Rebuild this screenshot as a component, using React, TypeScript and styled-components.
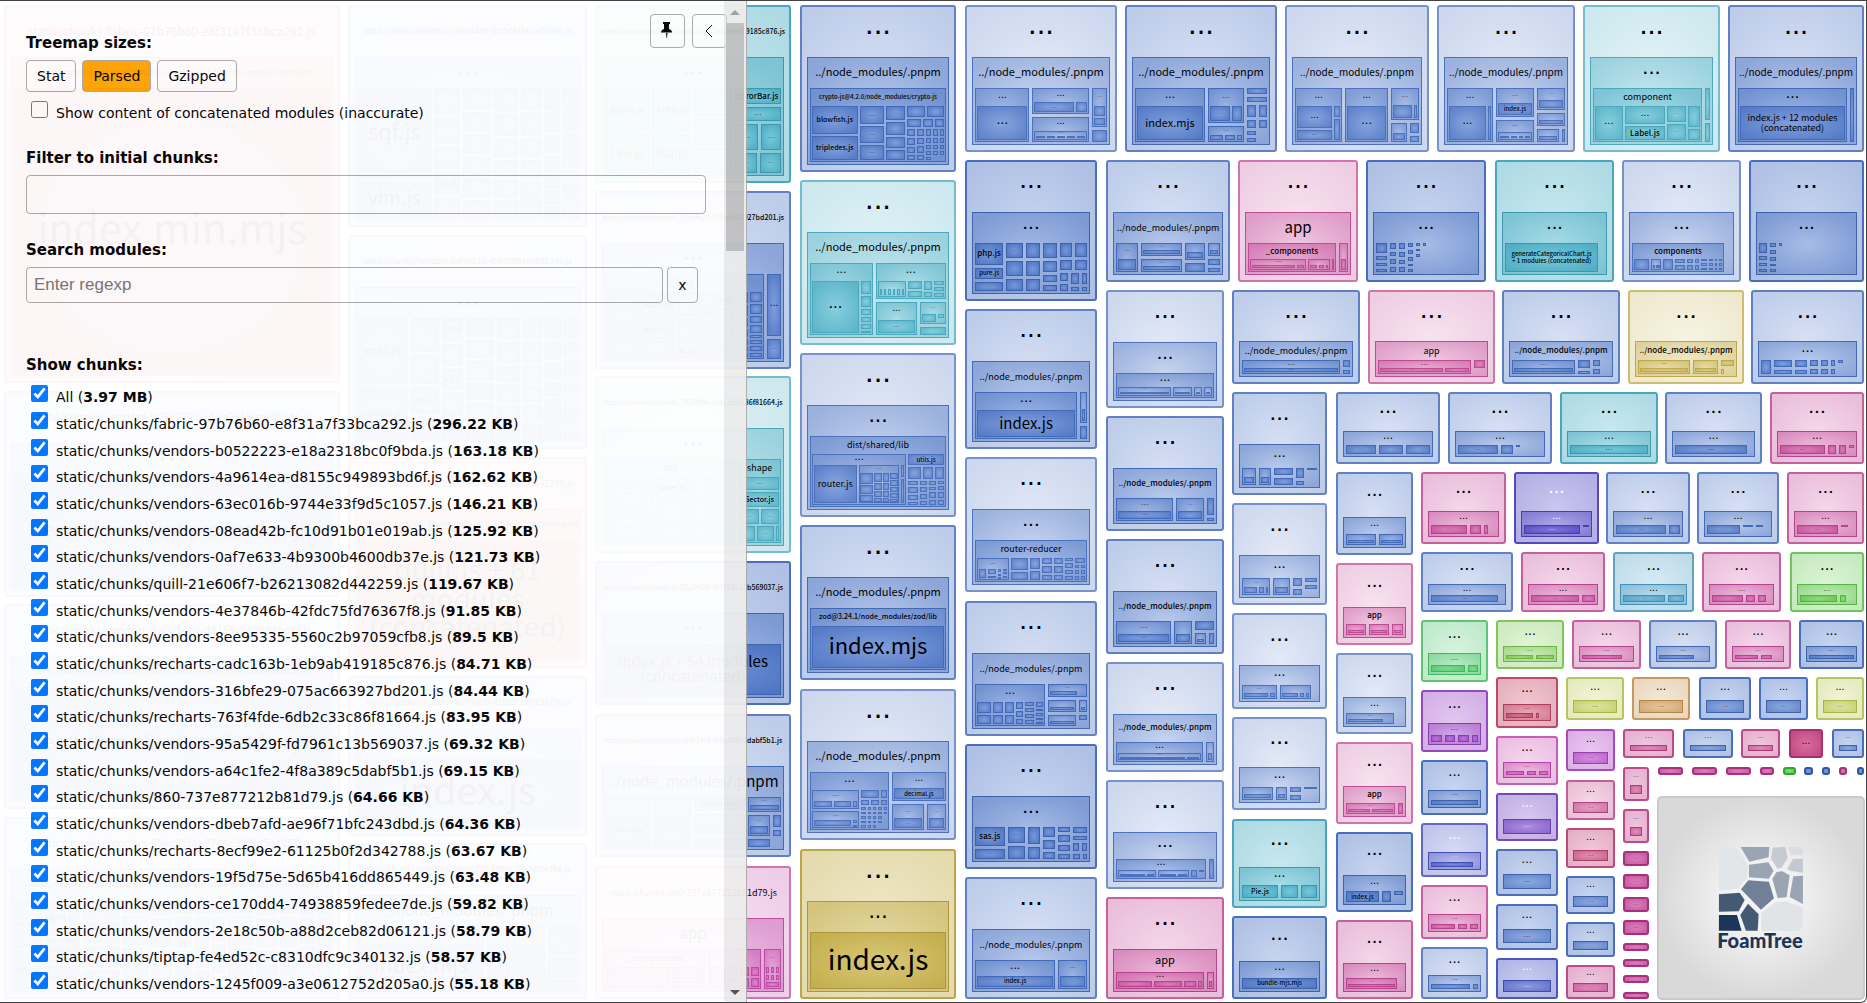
import React from "react";
import styled, { createGlobalStyle } from "styled-components";

/* ---------- treemap data ---------- */

// An item is a weight (anonymous leaf, negative = empty space) or a labelled node with columns.
// The label "=" marks an undrawn container that only splits its area into columns.
type Item = number | [number, string, ...Col[]];
type Col = [number, ...Item[]];
type Tile = [number, number, number, number, number, number, string, string | null, ...Col[]];

const PNPM = "../node_modules/.pnpm";
const BLUE = 220;
const TEAL = 191;
const PINK = 321;
const GOLD = 49;
const chunk = (name: string) => `static/chunks/${name}.js`;

const fine: Col[] = [[10, 10, 9, 8], [9, 8, 7, 6, 6], [7, 6, 6, 5, 5], [6, 5, 5, 4, 4, 4]];
const languages: Col[] = [
  [31, 18, 17, 17, 16, 16, 15],
  [26, 18, 18, 14, 14, 14, 13],
  [21, 17, 18, 15, 14, 13, 13],
  [18, 17, 15, 14, 12, 10, 10, 8],
  [15, 17, 14, 13, 11, 9, 8, 7, 6],
];

const tiles: Tile[] = [
  [5, 6, 339, 382, 350, 1, chunk("fabric-97b76b60-e8f31a7f33bca292"),
    "../node_modules/.pnpm/fabric@6.5.4_encoding@0.1.13/node_modules/fabric/dist", [1, [1, "index.min.mjs"]]],
  [5, 392, 339, 596, BLUE, 1, chunk("vendors-b0522223-e18a2318bc0f9bda"), "", [1, [1, "react-dom-client.production.js"]]],
  [5, 605, 339, 808, BLUE, 1, chunk("vendors-4a9614ea-d8155c949893bd6f"),
    "../node_modules/.pnpm/react-dom@19.0.0-rc.1_react@19.0.0-rc.1/node_modules/react-dom/cjs",
    [1, [1, "react-dom-client.production.js"]]],
  [5, 818, 339, 998, BLUE, 1, chunk("vendors-63ec016b-9744e33f9d5c1057"),
    "../node_modules/.pnpm/highlight.js@11.11.1/node_modules/highlight.js/lib/languages",
    [34, [50, "cmake.js"], [40, "factor.js"]], [44, [36, "gml.js"], [26, "gherkin.js"], [24, "csharp.js"]],
    [44, [20, "cobol.js"], 22, [22, "dax.js"], 20], ...languages, ...languages],
  [349, 6, 586, 226, BLUE, 1, chunk("vendors-08ead42b-fc10d91b01e019ab"), "",
    [79, [90, "sqf.js"], [36, "vim.js"]], [28, 27, 25, 24, [22, "sql.js"], 20], ...languages],
  [349, 236, 586, 448, BLUE, 1, chunk("vendors-0af7e633-4b9300b4600db37e"), "",
    [56, [60, "mel.js"], [48, "opencl.js"]], [32, 30, 26, [24, "nsis.js"], 20],
    [24, [20, "lisp.js"], 20, [18, "log.js"], 20, [18, "lua.js"]], ...languages],
  [349, 458, 586, 667, 0, 1, chunk("quill-21e606f7-b26213082d442259"),
    "../node_modules/.pnpm/quill@2.0.3/node_modules/quill", [1, [1, "quill.js + 61\nmodules\n(concatenated)"]]],
  [349, 677, 586, 835, BLUE, 1, chunk("vendors-4e37846b-42fdc75fd76367f8"), "", [1, [1, "index.js"]]],
  [349, 844, 586, 998, BLUE, 1, chunk("vendors-8ee95335-5560c2b97059cfb8"), PNPM,
    [130, [1, "", [1, [1, "index.mjs"]]]], [60, [60, "", ...fine]], [30, 30, 20, 10]],

  [596, 6, 790, 182, TEAL, 0, chunk("recharts-cadc163b-1eb9ab419185c876"), "",
    [44, [44, "Brush.js"], [39, "Line.js"]], [39, [44, "Area.js"], [39, "Bar.js"]], [38, 29, 27, 26],
    [46, [16, "ErrorBar.js"], 14, [26, "=", [24, 1], [20, 1]], [20, "=", [22, 1], [22, 1]]]],
  [596, 192, 790, 368, BLUE, 1, chunk("vendors-316bfe29-075ac663927bd201"), "",
    [160, [1, "lang", [33, 34, 31], [38, [27, "abap.js"], [18, "bash.js"], 16], [22, 24, 22, [14, "al.js"]],
      [18, 18, 14, 14, 12], [18, [14, "c.js"], 13, 12, 10, 8], [13, 11, 11, 8, 8, 6, 4, 4], [13, 11, 11, 8, 8, 4, 4, 6, 4]]],
    [14, 61, 20]],
  [596, 377, 790, 552, TEAL, 2, chunk("recharts-763f4fde-6db2c33c86f81664"), "",
    [134, [1, "util", [50, 34, 30], [34, [20, "types.js"], 20, 16], [24, 18, 16, 14], [20, 14, 12, 12]]],
    [44, [1, "shape", [1, 14, [15, "Sector.js"], [16, "=", [17, 1], [17, 1]], [16, "=", [14, 1], [16, 1], [3, 1]]]]]],
  [596, 562, 790, 704, BLUE, 0, chunk("vendors-95a5429f-fd7961c13b569037"), "",
    [1, [1, "index.js + 54 modules\n(concatenated)"]]],
  [596, 715, 790, 856, BLUE, 1, chunk("vendors-a64c1fe2-4f8a389c5dabf5b1"), PNPM,
    [44, [1, "", [1, [1, "index.mjs"]]]], [38, [1, "", [1, 1]]],
    [50, [16, "index.mjs"], [24, "", [1, 1]], 10], [33, [16, "", [1, 1]], [22, "=", [24, [1, "", [1, 1]]], [8, 12, 5]], [9, "=", [24, 1], [-8]]]],
  [596, 867, 790, 998, 312, 2, chunk("860-737e877212b81d79"), "app",
    [104, [1, "_components", [60, 1], [30, 20, 10]]], [54, [1, "", [20, 1], [14, 1, 1], [12, 1, 1], [10, 1, 1]]],
    [18, [1, "", [1, [8, "=", [1, 1, 1], [1, 1, 1], [1, 1, 1]], 3]]]],

  [801, 6, 955, 171, BLUE, 1, "", PNPM,
    [1, [1, "crypto-js@4.2.0/node_modules/crypto-js", [46, [28, "blowfish.js"], [24, "tripledes.js"]],
      [25, 18, 16, 15], [19, 14, 12, 11, 10],
      [37, [11, "=", [18, 1], [17, 1]], [8, "=", [14, 1], [10, 1], [9, 1]],
        [32, "=", [10, 7, 7, 6, 5], [8, 7, 6, 6, 5], [7, 7, 4, 4, 3, 3], [6, 7, 4, 4, 3, -3], [5, 7, 4, 4, 3, -3]]]]]],
  [801, 181, 955, 344, TEAL, 2, "", PNPM,
    [63, [1, "", [49, 1], [10, 14, 12, 6, 6, 5, 2]]],
    [71, [35, "", [30, [1, "", [4, 1], [4, 1], [4, 1], [4, 1], [4, 1], [4, 1]]], [14, 8, 5], [9, 9, 4], [10, 4, 5, 4]],
      [33, "=", [42, [1, "", [1, 1]]], [26, [23, "", [15, 1], [6, 6, -3]], 8]]]],
  [801, 354, 955, 516, BLUE, 2, "", "",
    [1, [1, "dist/shared/lib",
      [95, [1, "", [46, [1, "router.js"]], [43, [1, "", [15, 13, 11, 9], [8, 10, 8, 6, 5], [7, 10, 8, 6, 5], [8, 7, 7, 6, 6, 4]]], [4, 1, 2]]],
      [36, [12, "utils.js"], [12, "=", [13, 1], [11, 1], [9, 1]], [26, "=", [11, 6, 10, 7, 5], [9, 6, 8, 6, 6], [8, 6, 5, 8, 7], [7, 5, 5, 8, 7]]]]]],
  [801, 526, 955, 679, BLUE, 1, "", PNPM,
    [1, [1, "zod@3.24.1/node_modules/zod/lib", [1, [1, "index.mjs"]]]]],
  [801, 690, 955, 839, BLUE, 2, "", PNPM,
    [80, [1, "", [48, [20, "", [20, 1], [18, 1], [5, 1]], [17, "", [40, 1], [5, 3, 2]]],
      [26, [9, "=", [18, 1], [6, 1]], [6, "=", [9, 1], [8, 1], [7, 1]],
        [24, "=", [4, 1, 1, 1, 1, 1], [3, 1, 1, 1, 1, 1], [3, 1, 1, 1, 1, 1], [3, 1, 1, 1, 1, -1], [3, 1, 1, -1, -1, -1]]]]],
    [55, [30, "", [1, [1, "decimal.js"]]], [26, "=", [32, [1, "", [1, 1]]], [19, [1, "", [1, 1]]]]]],
  [801, 850, 955, 998, GOLD, 0, "", "", [1, [1, "index.js"]]],

  [966, 6, 1116, 151, BLUE, 2, "", PNPM,
    [54, [1, "", [1, 1]]], [56, [25, "", [38, 1], [11, 1]], [24, "", [1, [1, "", [5, 1], [5, 1], [5, 1], [5, 1], [5, 1]]]]],
    [15, [38, "", [1, 10, 6]], 12]],
  [1126, 6, 1276, 151, BLUE, 1, "", PNPM,
    [70, [1, "", [1, [1, "index.mjs"]]]], [36, [34, "", [20, 1], [10, 1]], [15, "", [13, 1], [11, 1], [5, 1]]],
    [20, 6, 5, [11, "=", [1, 1], [1, 1]], [8, "=", [1, 1], [1, 1]], [4, "=", [1, 1], [-1]], [4, "=", [1, 1], [-1]]]],
  [1286, 6, 1428, 151, BLUE, 2, "", PNPM,
    [47, [1, "", [34, 22, 10], [6, 10, 20]]], [42, [1, "", [1, 1]]],
    [28, [31, "", [20, 1], [3, 1]], [19, "=", [16, [1, "", [1, 1]]], [9, 10, 6]]]],
  [1438, 6, 1574, 151, BLUE, 2, "", PNPM,
    [46, [1, "", [36, 1], [3, 1]]], [38, [28, "", [1, [1, "index.js"]]], [22, "", [1, [1, "", [8, 1], [5, 1], [4, 1], [4, 1]]]]],
    [28, [22, "", [1, 1]], [13, "", [1, 1]], [13, "=", [21, [1, "", [1, 1]]], [3, 1]]]],
  [1584, 6, 1719, 151, TEAL, 2, "", "",
    [109, [1, "component", [28, 1], [41, 19, [14, "Label.js"]], [19, 16, 16], [12, 20, 11]]], [5, 31, 19]],
  [1729, 6, 1863, 151, BLUE, 1, "", PNPM,
    [110, [1, "", [1, [1, "index.js + 12 modules\n(concatenated)"]]]], [4, 1]],

  [966, 161, 1096, 300, BLUE, 0, "", "",
    [29, [21, "php.js"], [11, "pure.js"], 9], [17, 15, 14, 12], [15, 15, 14, 12], [14, 15, 12, 7, 6],
    [28, [14, "=", [13, 1], [12, 1]], [9, "=", [12, 1], [12, 1]], [18, "=", [8, 9, 7], [7, 8, 3], [5, 8, 3]]]],
  [966, 310, 1096, 448, BLUE, 1, "", PNPM, [104, [1, "", [1, [1, "index.js"]]]], [7, [32, "", [1, 1]], 13]],
  [966, 458, 1096, 591, BLUE, 2, "", "",
    [1, [1, "router-reducer", [33, [1, "", [8, 1], [10, 7, 3], [4, 3, 2, 1], [4, 1, 2, 2]]], [18, 13, 8], [10, 11, 9], [11, 7, 7, 6], [9, 7, 7, 6],
      [9, 4, 5, 5, 5], [10, 4, [13, "=", [1, 1, 1, 1], [1, 1, 1, 1]]]]]],
  [966, 602, 1096, 735, BLUE, 1, "", PNPM,
    [72, [1, "", [15, 11, 9], [11, 11, 9], [9, 11, 9], [8, 7, 6, 5], [9, 4, 5, 5, 4], [8, 5, 2, 3, 2, 2]]],
    [40, [12, "", [32, 1], [7, -1]], [11, "=", [28, [1, "", [1, 1]]], [8, [1, "", [1, 1]]]], [10, "=", [28, [1, "", [1, 1]]], [8, 6, -4]]]],
  [966, 745, 1096, 868, BLUE, 0, "", "",
    [30, [19, "sas.js"], 10], [17, 15, 12], [13, 17, 12], [12, 10, 8, 7], [12, 5, 6, 6, 5],
    [14, 5, 3, [7, "=", [6, 1], [5, 1]], [4, "=", [7, 1], [4, 1]]]],
  [966, 878, 1096, 998, BLUE, 1, "", PNPM, [81, [1, "", [1, [1, "index.js"]]]], [29, [1, "", [1, 1]]]],

  [1107, 161, 1229, 281, BLUE, 1, "", PNPM,
    [22, [1, "", [1, 1]]], [40, [14, "", [1, 1]], [13, "", [1, 1]]], [20, [17, "", [1, 1]], 9], [12, [13, "", [1, 1]], 6, 4]],
  [1239, 161, 1357, 281, PINK, 2, "", "app",
    [87, [1, "_components", [60, [1, "", [47, 1], [8, 1]]], [23, [1, "", [7, 1], [6, 1], [2, 1]]], [2, 1]]], [9, [1, "", [1, 1]]]],
  [1367, 161, 1485, 281, BLUE, 0, "", "",
    [11, 11, 4, 4, 3], [6, 6, 5, 5, 5], [6, 5, 4, 4, 4], [5, 5, 4, 4, 3, 3], [4, 3, 3, 3, -15], [3, 3, -24], [-48]],
  [1496, 161, 1613, 281, TEAL, 0, "", "", [97, [1, "generateCategoricalChart.js\n+ 1 modules (concatenated)"]], [-3]],
  [1623, 161, 1740, 281, BLUE, 2, "", "",
    [96, [1, "components", [16, 1], [11, [1, "", [2, 1], [2, 1], [2, 1]]], [10, 1], [11, 1, 1], [6, 1, 1], [5, 1, 1], [6, 1, 1, 1], [4, 1, 1, 1], [3, 1, 1, 1], [3, 1, 1, 1]]], [-4]],
  [1750, 161, 1863, 281, BLUE, 0, "", "", [9, 11, 5, 4, 3], [6, 4, 5, 4, 3, 3], [4, 4, -26], [-76]],

  [1107, 291, 1223, 407, BLUE, 2, "", "",
    [1, [1, "", [53, [1, "", [1, 1]]], [19, [1, "", [1, 1]]], [8, [1, "", [1, 1]]], [8, [1, "", [1, 1]]]]]],
  [1107, 417, 1223, 530, BLUE, 1, "", PNPM, [58, [1, "", [1, 1]]], [28, [1, "", [1, 1]]], [7, 17, 3]],
  [1107, 540, 1223, 653, BLUE, 1, "", PNPM, [56, [1, "", [1, 1]]], [18, [1, "", [1, 1]]], [19, 8, [11, "=", [11, [1, "", [1, 1]]], [5, 1]]]],
  [1107, 663, 1223, 771, BLUE, 2, "", PNPM, [87, [1, "", [1, [1, "", [66, 1], [12, 1]]]]], [8, [1, "", [1, 1]]]],
  [1107, 781, 1223, 888, BLUE, 2, "", "",
    [90, [1, "", [38, [1, "", [24, 1], [6, 1]]], [32, [1, "", [16, 1], [9, 1]]], [6, 1], [5, 2, -5]]], [5, 1]],
  [1107, 898, 1223, 998, PINK, 1, "", "app", [88, [1, "", [35, 1], [29, 1], [12, 1], [4, 1]]], [7, [1, "", [1, 1]]]],

  [1233, 291, 1359, 383, BLUE, 1, "", PNPM, [97, [1, "", [1, 1]]], [7, 5, 3]],
  [1369, 291, 1494, 383, PINK, 2, "", "app", [93, [1, "", [64, 1], [24, 1]]], [11, 10, -4]],
  [1503, 291, 1619, 383, BLUE, 1, "", PNPM, [64, [1, "", [1, 1]]], [12, 8, 3], [7, 6, 5], [-7]],
  [1629, 291, 1743, 383, GOLD, 2, "", PNPM, [53, [1, "", [1, 1]]], [25, [1, "", [1, 1]]], [13, 5, [5, "=", [4, 1], [-8]]]],
  [1752, 291, 1863, 383, BLUE, 1, "", "", [10, 1], [18, 7, 4], [11, 7, 4], [8, 6, 5], [7, 6, 5], [4, 6, 5], [5, 3, -9], [-8]],

  [1233, 393, 1326, 494, BLUE, 1, "", "", [14, [1, "", [1, 1]]], [12, [1, "", [1, 1]]], [18, 7, 6], [8, 10, 4], [10, 2, -14]],
  [1233, 504, 1326, 604, BLUE, 2, "", "", [28, [1, "", [12, 1], [5, 1], [2, 1]]], [16, [1, "", [1, 1]]], [9, 7, 6], [12, 4, 5, -4]],
  [1233, 614, 1326, 708, BLUE, 2, "", "", [36, [1, "", [25, 1], [5, 1]]], [33, [1, "", [17, 1], [4, 1], [3, 1]]], [-3]],
  [1233, 718, 1326, 809, BLUE, 2, "", "", [30, [1, "", [1, 1]]], [11, [1, "", [1, 1]]], [10, 5, 4], [13, 2, -10]],
  [1233, 820, 1326, 907, TEAL, 0, "", "", [36, [1, "Pie.js"]], [17, 1], [16, 1]],
  [1233, 917, 1326, 998, BLUE, 0, "", "", [1, [1, "bundle-mjs.mjs"]]],

  [1337, 393, 1439, 463, BLUE, 1, "", "", [30, 1], [24, 1], [24, 1]],
  [1449, 393, 1551, 463, BLUE, 1, "", "", [41, 1], [12, 1], [4, 4, -6], [-20]],
  [1561, 393, 1657, 463, TEAL, 0, "", "", [1, 1]],
  [1666, 393, 1761, 463, BLUE, 1, "", "", [75, 1], [-2]],
  [1771, 393, 1863, 463, PINK, 1, "", "", [44, 1], [8, 1], [7, 1], [5, 5, -5]],

  [1337, 473, 1412, 554, BLUE, 1, "", "", [29, [1, "", [1, 1]]], [24, [1, "", [1, 1]]]],
  [1337, 564, 1412, 644, PINK, 2, "", "app", [20, [1, "", [1, 1]]], [19, [1, "", [1, 1]]], [11, [1, "", [1, 1]]]],
  [1337, 654, 1412, 733, BLUE, 2, "", "", [50, [1, "", [38, 1], [-8]]], [-6]],
  [1337, 743, 1412, 823, PINK, 2, "", "app", [50, [1, "", [1, 1], [1, 1]]], [5, 1]],
  [1337, 833, 1412, 911, BLUE, 0, "", "", [33, [1, "index.js"]], [9, 1], [9, 4, -5]],
  [1337, 921, 1412, 998, PINK, 1, "", "", [54, [1, "", [1, 1]]], [-3]],

  [1422, 473, 1505, 543, PINK, 1, "", "", [38, 1], [11, 1], [5, 1], [-5]],
  [1515, 473, 1598, 543, 245, 0, "", "", [56, 1], [6, 3, -5]],
  [1607, 473, 1689, 543, BLUE, 1, "", "", [48, 1], [10, 1]],
  [1698, 473, 1778, 543, BLUE, 1, "", "", [35, 1], [10, 3, -5], [8, 3, -5], [-3]],
  [1788, 473, 1863, 543, PINK, 1, "", "", [43, 1], [8, 3, -5], [-3]],

  [1422, 553, 1512, 611, BLUE, 1, "", "", [70, 1], [-2]],
  [1522, 553, 1604, 611, PINK, 1, "", "", [48, 1], [13, 1]],
  [1614, 553, 1693, 611, 200, 1, "", "", [43, 1], [16, 1]],
  [1703, 553, 1780, 611, PINK, 1, "", "", [32, 1], [10, 1], [8, 1], [-2]],
  [1791, 553, 1863, 611, 110, 1, "", "", [40, 1], [7, 1], [-5]],

  [1422, 621, 1487, 681, 135, 1, "", "", [34, 1], [10, 1]],
  [1422, 691, 1487, 751, 280, 0, "", "", [11, 1], [11, 1], [11, 1], [6, 1]],
  [1422, 761, 1487, 814, BLUE, 0, "", "", [1, 1]],
  [1422, 824, 1487, 876, 234, 1, "", "", [45, 1], [-2]],
  [1422, 886, 1487, 938, PINK, 1, "", "", [24, 1], [9, 1], [8, 1]],
  [1422, 948, 1487, 998, BLUE, 1, "", "", [39, 1], [5, 1]],

  [1497, 621, 1563, 668, 98, 1, "", "", [28, 1], [18, 1]],
  [1573, 621, 1640, 668, PINK, 1, "", "", [47, 1], [-7]],
  [1650, 621, 1716, 668, BLUE, 1, "", "", [38, 1], [-11]],
  [1726, 621, 1790, 668, PINK, 1, "", "", [26, 1], [12, 1], [-7]],
  [1800, 621, 1863, 668, BLUE, 0, "", "", [1, 1]],

  [1497, 678, 1557, 727, 345, 0, "", "", [31, 1], [4, 1], [-7]],
  [1497, 737, 1557, 784, 310, 1, "", "", [18, 1], [10, 1], [9, 1]],
  [1497, 794, 1557, 840, 262, 0, "", ""],
  [1497, 850, 1557, 895, BLUE, 0, "", ""],
  [1497, 905, 1557, 949, BLUE, 0, "", ""],
  [1497, 959, 1557, 998, 233, 0, "", ""],

  [1567, 678, 1623, 719, 67, 1, "", ""],
  [1633, 678, 1689, 719, 34, 1, "", ""],
  [1700, 678, 1750, 719, BLUE, 0, "", ""],
  [1760, 678, 1807, 719, BLUE, 0, "", ""],
  [1817, 678, 1863, 719, 67, 1, "", ""],

  [1567, 730, 1614, 770, 291, 0, "", ""],
  [1567, 781, 1614, 819, 328, 1, "", ""],
  [1567, 829, 1614, 867, 336, 0, "", ""],
  [1567, 877, 1614, 913, BLUE, 0, "", ""],
  [1567, 923, 1614, 956, BLUE, 0, "", ""],
  [1567, 966, 1614, 998, 326, 0, "", ""],

  [1624, 730, 1673, 757, 326, 0, "", ""],
  [1684, 730, 1732, 757, BLUE, 0, "", ""],
  [1742, 730, 1779, 757, 326, 0, "", ""],
  [1790, 730, 1822, 757, 332, 4, "", null],
  [1833, 730, 1863, 757, BLUE, 0, "", ""],

  [1624, 768, 1648, 800, 326, 0, "", ""],
  [1624, 810, 1648, 842, 326, 0, "", ""],
  [1624, 852, 1648, 865, PINK, 3, "", null],
  [1624, 875, 1648, 888, PINK, 3, "", null],
  [1624, 898, 1648, 911, PINK, 3, "", null],
  [1624, 921, 1648, 934, PINK, 3, "", null],
  [1624, 944, 1648, 950, PINK, 3, "", null],
  [1624, 960, 1648, 966, PINK, 3, "", null],
  [1624, 976, 1648, 982, PINK, 3, "", null],
  [1624, 993, 1648, 998, PINK, 3, "", null],

  [1659, 768, 1682, 774, PINK, 3, "", null],
  [1693, 768, 1716, 774, PINK, 3, "", null],
  [1727, 768, 1750, 774, PINK, 3, "", null],
  [1761, 768, 1773, 774, PINK, 3, "", null],
  [1784, 768, 1795, 774, 120, 3, "", null],
  [1805, 768, 1812, 774, BLUE, 3, "", null],
  [1823, 768, 1829, 774, BLUE, 3, "", null],
  [1840, 768, 1846, 774, 325, 3, "", null],
  [1858, 768, 1863, 774, BLUE, 3, "", null],
];

/* ---------- treemap layout ---------- */

type Box = { x: number; y: number; w: number; h: number };
type Cell = Box & { level: number; leaf: boolean; label: string; header: number; hue: number; tone: number };

const HEADER = [51, 31, 18, 11, 8];
const INSET = [6, 3, 2, 2, 1];
const GAP = [0, 3, 2, 2, 1];

function spread(weights: number[], size: number, gap: number) {
  const total = weights.reduce((sum, w) => sum + Math.abs(w), 0);
  const free = size - gap * (weights.length - 1);
  let at = 0;
  return weights.map((w) => {
    const length = (Math.abs(w) / total) * free;
    const start = at;
    at += length + gap;
    return [start, length];
  });
}

function place(cols: Col[], box: Box, level: number, hue: number, tone: number, out: Cell[]) {
  const gap = GAP[Math.min(level - 1, 4)];
  const xs = spread(cols.map((c) => c[0]), box.w, gap);
  cols.forEach((col, i) => {
    const items = col.slice(1) as Item[];
    const ys = spread(items.map((it) => (typeof it === "number" ? it : it[0])), box.h, gap);
    items.forEach((item, j) => {
      const cell = { x: box.x + xs[i][0], y: box.y + ys[j][0], w: xs[i][1], h: ys[j][1] };
      if (typeof item === "number") {
        if (item > 0) addNode("", [], cell, level, hue, tone, out);
      } else if (item[1] === "=") {
        place(item.slice(2) as Col[], cell, level, hue, tone, out);
      } else {
        addNode(item[1], item.slice(2) as Col[], cell, level, hue, tone, out);
      }
    });
  });
}

function addNode(label: string, cols: Col[], box: Box, level: number, hue: number, tone: number, out: Cell[]) {
  const leaf = cols.length === 0;
  const header = leaf ? box.h : Math.min(HEADER[Math.min(level, 4)], box.h * 0.54);
  out.push({ ...box, level, leaf, label, header, hue, tone });
  if (leaf) return;
  const inset = INSET[Math.min(level, 4)];
  const inner = { x: box.x + inset, y: box.y + header, w: box.w - 2 * inset, h: box.h - header - inset };
  if (inner.w > 1 && inner.h > 1) place(cols, inner, level + 1, hue, tone, out);
}

const cells: Cell[] = [];
tiles.forEach(([x, y, x2, y2, hue, tone, label, second, ...cols]) => {
  const body: Col[] = second === null ? [] : [[1, [1, second, ...(cols as Col[])]]];
  addNode(label, body, { x, y, w: x2 - x, h: y2 - y }, 0, hue, tone, cells);
});

/* ---------- treemap colours and text ---------- */

function lightness(c: Cell) {
  if (c.tone === 4) return 52;
  if (c.tone === 3) return 56;
  if (c.level === 0) return 79 + c.tone * 4;
  if (c.level === 1) return (c.leaf ? 60 : 66) + c.tone * 4;
  if (c.leaf) return 54 + c.tone * 2;
  return 60 + c.tone * 3;
}

const paintKey = (c: Cell) => `p${c.hue}-${lightness(c)}`;
const paints = new Map<string, [number, number]>();
cells.forEach((c) => paints.set(paintKey(c), [c.hue, lightness(c)]));

const strokeOf = (c: Cell) => {
  const light = c.level === 0 ? 51 + c.tone * 6 : 46 + c.tone * 3;
  return c.tone > 2 ? `hsl(${c.hue} 55% 42%)` : `hsl(${c.hue} 46% ${light}%)`;
};

function emWidth(text: string) {
  let sum = 0;
  for (const ch of text) {
    if (/[ijl.,:'()/ ftr]/.test(ch)) sum += 0.31;
    else if (/[mwM@]/.test(ch)) sum += 0.88;
    else sum += 0.55;
  }
  return sum;
}

function labelSize(c: Cell) {
  const lines = c.label.split("\n");
  const longest = Math.max(...lines.map(emWidth));
  const share = longest > 6 ? 0.86 : 0.77;
  const byHeight = (c.header * (c.leaf ? 0.56 : 0.48)) / (lines.length > 1 ? lines.length * 0.66 : 1);
  return Math.round(Math.min((c.w * share) / longest, byHeight));
}

const MapText = styled.text<{ $size: number; $white?: boolean }>`
  font-family: "Noto Sans CJK SC", "Noto Sans", sans-serif;
  font-size: ${(p) => p.$size}px;
  font-weight: ${(p) => (p.$size < 9 ? 500 : 400)};
  text-anchor: middle;
  fill: ${(p) => (p.$white ? "#fff" : "#000")};
`;

const Dots = styled(MapText)`
  font-family: "Liberation Sans", Arial, sans-serif;
  font-weight: 400;
`;

function CellText({ cell }: { cell: Cell }) {
  const cx = cell.x + cell.w / 2;
  const cy = cell.y + cell.header / 2;
  const white = cell.hue > 225 && cell.hue < 270;
  if (!cell.label) {
    const size = Math.round(Math.sqrt(cell.w * cell.header) * 0.35);
    if (size < 6) return null;
    return (
      <Dots $size={size} $white={white} x={cx} y={cy + size * 0.07} opacity={size < 10 ? 0.6 : 1}>
        ...
      </Dots>
    );
  }
  const size = labelSize(cell);
  if (size < 3) return null;
  const lines = cell.label.split("\n");
  return (
    <>
      {lines.map((line, i) => (
        <MapText key={line} $size={size} $white={white} x={cx} y={cy + size * 0.34 + (i - (lines.length - 1) / 2) * size * 1.02}>
          {line}
        </MapText>
      ))}
    </>
  );
}

const LogoText = styled.text`
  font: 900 20px Lato, sans-serif;
  fill: #1d3557;
  text-anchor: middle;
`;

function FoamTreeLogo() {
  return (
    <g>
      <rect x="1658" y="797" width="206" height="202" rx="4" fill="url(#badge)" stroke="#cacaca" strokeWidth="2" />
      <g transform="translate(1400 660) scale(.3333)">
        <path fill="#e3e6e9" d="M957 580q0-19 19-19h26q10 0 14 8l29 50-4 36-26 31-58 6z" />
        <path fill="#9aa5b4" d="M1022 561h86l-2 31-58 13z" />
        <path fill="#c6cbd2" d="M1118 563l38-2 7 32-18 30-12 3-20-30z" />
        <path fill="#d9dce0" d="M1164 561h30q15 0 15 14v10l-36-1z" />
        <path fill="#9aa5b4" d="M1047 614l58-7 16 25-14 24-60-4z" />
        <path fill="#c3c9d1" d="M1179 597l30-1v42l-38-6-9-5z" />
        <path fill="#9aa5b4" d="M1117 656l13-20 17-2 22 12-9 66-27 2z" />
        <path fill="#9aa5b4" d="M1180 649l29-2v85l-40-21z" />
        <path fill="#728097" d="M1045 661l62 4 15 50-39 34-60-61z" />
        <path fill="#465973" d="M957 703l62-5 15 22-18 34-59 1z" />
        <path fill="#465973" d="M1044 731l32 32-3 49h-35l-17-47z" />
        <path fill="#1d3557" d="M957 765h54l14 47h-68z" />
        <path fill="#e1e4e7" d="M1084 759l44-34h32l49 18v48q0 22-22 22h-104z" />
      </g>
      <LogoText x="1760" y="948">FoamTree</LogoText>
    </g>
  );
}

const Chart = styled.svg`
  display: block;
  width: 100%;
  height: 100vh;
`;

function Treemap() {
  return (
    <Chart viewBox="0 0 1867 1003" preserveAspectRatio="xMinYMin meet" role="img" aria-label="Bundle treemap">
      <defs>
        {[...paints].map(([id, [hue, light]]) => (
          <radialGradient key={id} id={id} cx="50%" cy="52%" r="62%">
            <stop offset="0" stopColor={`hsl(${hue} 57% ${Math.min(light + (light > 75 ? 7 : 12), 93)}%)`} />
            <stop offset="1" stopColor={`hsl(${hue} 50% ${light}%)`} />
          </radialGradient>
        ))}
        <radialGradient id="badge">
          <stop offset="0.3" stopColor="#f3f3f3" />
          <stop offset="1" stopColor="#d9d9d9" />
        </radialGradient>
      </defs>
      {cells.map((c, i) => {
        const outer = c.level === 0;
        const snap = outer ? 0 : 0.5;
        const x = Math.round(c.x) + snap;
        const y = Math.round(c.y) + snap;
        return (
          <rect
            key={i}
            x={x}
            y={y}
            width={Math.max(1, Math.round(c.x + c.w) + (outer ? 0 : -0.5) - x)}
            height={Math.max(1, Math.round(c.y + c.h) + (outer ? 0 : -0.5) - y)}
            rx={outer ? 2 : 0}
            fill={`url(#${paintKey(c)})`}
            stroke={strokeOf(c)}
            strokeWidth={outer ? 2 : 1}
          />
        );
      })}
      {cells.map((c, i) => (
        <CellText key={i} cell={c} />
      ))}
      <FoamTreeLogo />
    </Chart>
  );
}

/* ---------- sidebar ---------- */

const chunks: [string, string][] = [
  ["All", "3.97 MB"],
  [chunk("fabric-97b76b60-e8f31a7f33bca292"), "296.22 KB"],
  [chunk("vendors-b0522223-e18a2318bc0f9bda"), "163.18 KB"],
  [chunk("vendors-4a9614ea-d8155c949893bd6f"), "162.62 KB"],
  [chunk("vendors-63ec016b-9744e33f9d5c1057"), "146.21 KB"],
  [chunk("vendors-08ead42b-fc10d91b01e019ab"), "125.92 KB"],
  [chunk("vendors-0af7e633-4b9300b4600db37e"), "121.73 KB"],
  [chunk("quill-21e606f7-b26213082d442259"), "119.67 KB"],
  [chunk("vendors-4e37846b-42fdc75fd76367f8"), "91.85 KB"],
  [chunk("vendors-8ee95335-5560c2b97059cfb8"), "89.5 KB"],
  [chunk("recharts-cadc163b-1eb9ab419185c876"), "84.71 KB"],
  [chunk("vendors-316bfe29-075ac663927bd201"), "84.44 KB"],
  [chunk("recharts-763f4fde-6db2c33c86f81664"), "83.95 KB"],
  [chunk("vendors-95a5429f-fd7961c13b569037"), "69.32 KB"],
  [chunk("vendors-a64c1fe2-4f8a389c5dabf5b1"), "69.15 KB"],
  [chunk("860-737e877212b81d79"), "64.66 KB"],
  [chunk("vendors-dbeb7afd-ae96f71bfc243dbd"), "64.36 KB"],
  [chunk("recharts-8ecf99e2-61125b0f2d342788"), "63.67 KB"],
  [chunk("vendors-19f5d75e-5d65b416dd865449"), "63.48 KB"],
  [chunk("vendors-ce170dd4-74938859fedee7de"), "59.82 KB"],
  [chunk("vendors-2e18c50b-a88d2ceb82d06121"), "58.79 KB"],
  [chunk("tiptap-fe4ed52c-c8310dfc9c340132"), "58.57 KB"],
  [chunk("vendors-1245f009-a3e0612752d205a0"), "55.18 KB"],
];

const GlobalStyle = createGlobalStyle`
  body {
    margin: 0;
    background: #fff;
    overflow: hidden;
  }
`;

const Page = styled.div`
  position: relative;
  box-sizing: border-box;
  height: 100vh;
  overflow: hidden;
  font: 14px/20px "DejaVu Sans", Verdana, sans-serif;
  color: #000;
`;

const Frame = styled.div`
  position: absolute;
  inset: 0;
  border: solid #444448;
  border-width: 1px 1px 1px 0;
  border-bottom-right-radius: 6px;
  pointer-events: none;
`;

const Sidebar = styled.aside`
  position: absolute;
  top: 1px;
  bottom: 1px;
  left: 0;
  box-sizing: border-box;
  width: 40%;
  padding: 32px 40px 0 26px;
  border-right: 1px solid #aaa;
  border-bottom-left-radius: 8px;
  background: #fff;
  opacity: 0.95;
  overflow: hidden;
`;

const Section = styled.section<{ $space: number }>`
  display: flex;
  flex-direction: column;
  margin-bottom: ${(p) => p.$space}px;
`;

const Title = styled.label`
  margin-bottom: 7px;
  font-size: 15px;
  font-weight: 700;
`;

const Buttons = styled.div`
  display: flex;
  gap: 6px;
`;

const Button = styled.button<{ $active?: boolean }>`
  height: 32px;
  padding: 0 10px;
  border: 1px solid #aaa;
  border-radius: 4px;
  background: ${(p) => (p.$active ? "#ffa500" : "#fff")};
  color: #000;
  font: inherit;
`;

const ClearButton = styled(Button)`
  width: 31px;
  height: 36px;
  margin-right: 8px;
  padding: 0;
`;

const Tools = styled.div`
  position: absolute;
  top: 13px;
  right: 19px;
  display: flex;
  gap: 7px;
`;

const ToolButton = styled(Button)`
  display: flex;
  align-items: center;
  justify-content: center;
  width: 35px;
  height: 34px;
  padding: 0;
`;

const TextBox = styled.input<{ $height: number }>`
  box-sizing: border-box;
  flex: 1 0 ${(p) => p.$height}px;
  min-width: 0;
  height: ${(p) => p.$height}px;
  padding: 0 7px;
  border: 1px solid #aaa;
  border-radius: 4px;
  background: #fff;
  font: 17px "Liberation Sans", Arial, sans-serif;

  &::placeholder {
    color: #757575;
  }
`;

const SearchRow = styled.div`
  display: flex;
  gap: 4px;
`;

const CheckRow = styled.label`
  display: flex;
  align-items: flex-start;
  gap: 8px;
  padding-left: 5px;
  white-space: nowrap;
`;

const CheckText = styled.span`
  padding-top: 2px;
`;

const Check = styled.input`
  width: 17px;
  height: 17px;
  margin: 0;
  accent-color: #0075ff;
`;

const ChunkList = styled.div`
  display: grid;
  grid-auto-rows: 27px 27px 26px;
  margin-top: 3px;
`;

const OptionRow = styled.div`
  margin-top: 9px;
`;

const Scrollbar = styled.div`
  position: absolute;
  top: 0;
  right: 0;
  bottom: 0;
  display: flex;
  flex-direction: column;
  align-items: center;
  justify-content: space-between;
  width: 22px;
  padding: 9px 0 7px;
  box-sizing: border-box;
  background: rgba(225, 225, 225, 0.6);
`;

const Arrow = styled.i<{ $down?: boolean }>`
  border: 5px solid transparent;
  border-top: ${(p) => (p.$down ? "5px solid #505050" : "0")};
  border-bottom: ${(p) => (p.$down ? "0" : "5px solid #a0a0a0")};
`;

const Thumb = styled.div`
  height: 228px;
  width: 18px;
  margin: 8px 0 auto;
  background: #c1c1c1;
`;

function ChunkSidebar() {
  return (
    <Sidebar>
      <Section $space={25}>
        <Title as="div">Treemap sizes:</Title>
        <Buttons>
          <Button>Stat</Button>
          <Button $active>Parsed</Button>
          <Button>Gzipped</Button>
        </Buttons>
        <OptionRow>
          <CheckRow>
            <Check type="checkbox" />
            <CheckText>Show content of concatenated modules (inaccurate)</CheckText>
          </CheckRow>
        </OptionRow>
      </Section>
      <Section $space={26}>
        <Title htmlFor="initial">Filter to initial chunks:</Title>
        <TextBox id="initial" $height={39} />
      </Section>
      <Section $space={52}>
        <Title htmlFor="search">Search modules:</Title>
        <SearchRow>
          <TextBox id="search" placeholder="Enter regexp" $height={36} />
          <ClearButton>x</ClearButton>
        </SearchRow>
      </Section>
      <Section $space={0}>
        <Title as="div">Show chunks:</Title>
        <ChunkList>
          {chunks.map(([name, size]) => (
            <CheckRow key={name}>
              <Check type="checkbox" defaultChecked />
              <CheckText>
                {name} (<b>{size}</b>)
              </CheckText>
            </CheckRow>
          ))}
        </ChunkList>
      </Section>
      <Tools>
        <ToolButton aria-label="Pin sidebar">
          <svg width="12" height="18" viewBox="0 0 12 18">
            <path d="M2 0h7v2H8v5q3 1 3 3.500H0Q0 8 3 7V2H2zM5 11h1.500L6 16h-.5z" />
          </svg>
        </ToolButton>
        <ToolButton aria-label="Hide sidebar">
          <svg width="10" height="14" viewBox="0 0 10 14">
            <path d="M8 1L2 7l6 6" fill="none" stroke="#000" />
          </svg>
        </ToolButton>
      </Tools>
      <Scrollbar>
        <Arrow />
        <Thumb />
        <Arrow $down />
      </Scrollbar>
    </Sidebar>
  );
}

export default function App() {
  return (
    <Page>
      <GlobalStyle />
      <Treemap />
      <ChunkSidebar />
      <Frame />
    </Page>
  );
}
